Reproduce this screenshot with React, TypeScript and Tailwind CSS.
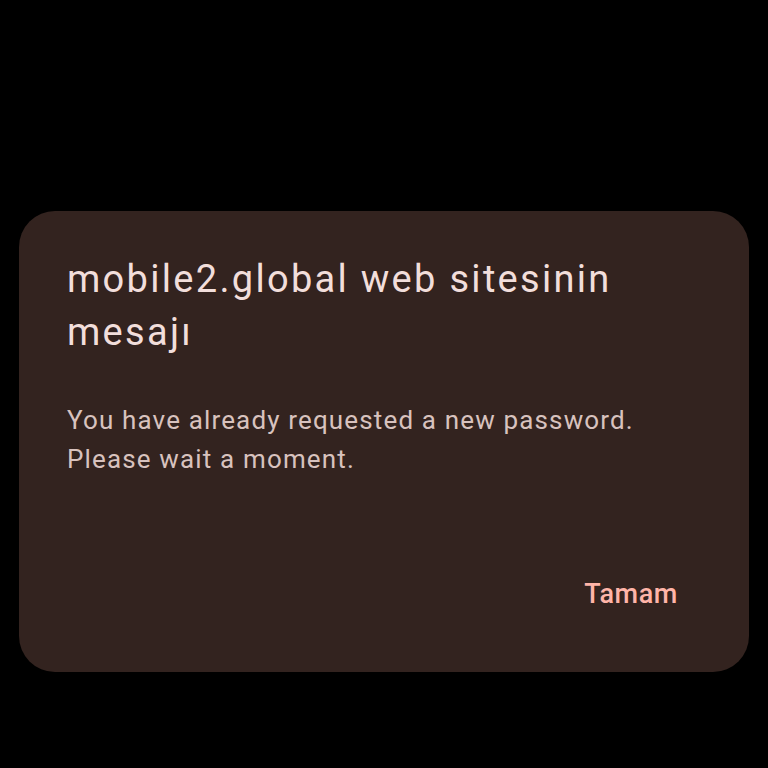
export default function App() {
  return (
    <div className="h-[768px] w-[768px] bg-black pl-[19px] pt-[211px] font-['Roboto','Noto_Sans',sans-serif]">
      <div className="flex h-[461px] w-[730px] flex-col rounded-[36px] bg-[#33231f] pl-12 pr-[71px] pt-[42px]">
        <h1 className="max-w-[570px] text-[38px] leading-[53px] tracking-[2.3px] text-[#f2dedb]">
          mobile2.global web sitesinin mesajı
        </h1>
        <p className="mt-[42px] max-w-[590px] text-[26px] leading-[39px] tracking-[1.15px] text-[#d8c2be]">
          You have already requested a new password. Please wait a moment.
        </p>
        <div className="mt-auto mb-[58px] flex justify-end">
          <button className="text-[27px] leading-[40px] font-medium tracking-[0.6px] text-[#ffb4a8]">
            Tamam
          </button>
        </div>
      </div>
    </div>
  );
}
